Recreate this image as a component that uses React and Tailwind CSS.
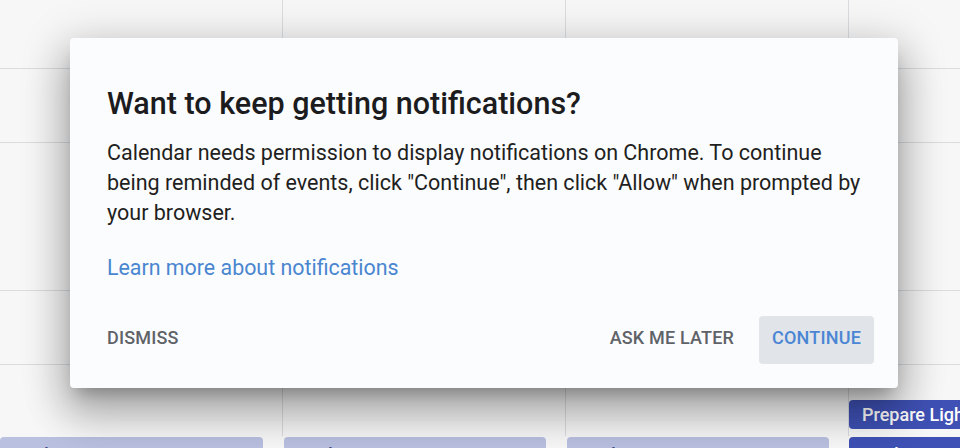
import React from "react";

const Row = ({ h, border = true, children }) => (
  <div
    className={`grid grid-cols-[283px_283px_283px_111px] shrink-0 ${h} ${
      border ? "border-b border-[#dadce0]" : ""
    }`}
  >
    {children}
  </div>
);

const Cell = ({ last, children }) => (
  <div className={`h-full ${last ? "" : "border-r border-[#dadce0]"}`}>
    {children}
  </div>
);

const EmptyRow = ({ h }) => (
  <Row h={h}>
    <Cell />
    <Cell />
    <Cell />
    <Cell last />
  </Row>
);

const LightEvent = () => (
  <div className="mr-[20px] h-[40px] rounded-t-[4px] bg-[#b9c0e0] px-[12px] pt-[6px] text-[18px] font-medium leading-[24px] text-[#3c4684]">
    Work
  </div>
);

export default function App() {
  return (
    <div
      className="relative w-[960px] h-[448px] overflow-hidden bg-[#f7f7f8]"
      style={{ fontFamily: "Roboto, 'Noto Sans', sans-serif" }}
    >
      {/* calendar behind the dialog */}
      <div className="flex h-full flex-col">
        <EmptyRow h="h-[69px]" />
        <EmptyRow h="h-[74px]" />
        <EmptyRow h="h-[148px]" />
        <EmptyRow h="h-[74px]" />
        <Row h="h-[71px]" border={false}>
          <Cell />
          <Cell />
          <Cell />
          <Cell last>
            <div className="mt-[35px] h-[29px] rounded-l-[4px] bg-[#3f51b5] pl-[13px] text-[18px] font-medium leading-[29px] text-white whitespace-nowrap">
              Prepare Lighthouse
            </div>
          </Cell>
        </Row>
        <div className="grid grid-cols-[283px_283px_283px_111px] pt-[1px]">
          <div>
            <LightEvent />
          </div>
          <div className="pl-[1px]">
            <LightEvent />
          </div>
          <div className="pl-[1px]">
            <LightEvent />
          </div>
          <div>
            <div className="h-[40px] rounded-tl-[4px] bg-[#3f51b5] px-[13px] pt-[6px] text-[18px] font-medium leading-[24px] text-white">
              Work
            </div>
          </div>
        </div>
      </div>

      {/* dialog */}
      <div className="absolute left-[70px] top-[38px] w-[828px] h-[350px] rounded-[4px] bg-[#fbfcfe] shadow-[0_24px_40px_4px_rgba(0,0,0,0.24),0_9px_46px_8px_rgba(0,0,0,0.14),0_11px_15px_-7px_rgba(0,0,0,0.25)] flex flex-col">
        <div className="pl-[37px] pr-[32px] pt-[48px]">
          <h2 className="text-[30.5px] font-medium leading-[36px] text-[#1c1c1e]">
            Want to keep getting notifications?
          </h2>
          <p className="mt-[16px] text-[21.5px] leading-[30px] text-[#1f1f21]">
            Calendar needs permission to display notifications on Chrome. To
            continue being reminded of events, click "Continue", then click
            "Allow" when prompted by your browser.
          </p>
          <a className="mt-[25px] block text-[21.4px] leading-[30px] text-[#4a86d0]">
            Learn more about notifications
          </a>
        </div>
        <div className="mt-[33px] flex items-center px-[24px]">
          <button className="h-[48px] rounded-[4px] px-[13px] pb-[5px] text-[18px] font-medium tracking-[0.01em] text-[#5f6368]">
            DISMISS
          </button>
          <div className="ml-auto flex items-center gap-[12px]">
            <button className="h-[48px] rounded-[4px] px-[13px] pb-[5px] text-[18px] font-medium tracking-[0.01em] text-[#5f6368]">
              ASK ME LATER
            </button>
            <button className="h-[48px] rounded-[4px] bg-[#e1e4e9] px-[13px] pb-[5px] text-[18px] font-medium tracking-[0.01em] text-[#4a86d4]">
              CONTINUE
            </button>
          </div>
        </div>
      </div>
    </div>
  );
}
